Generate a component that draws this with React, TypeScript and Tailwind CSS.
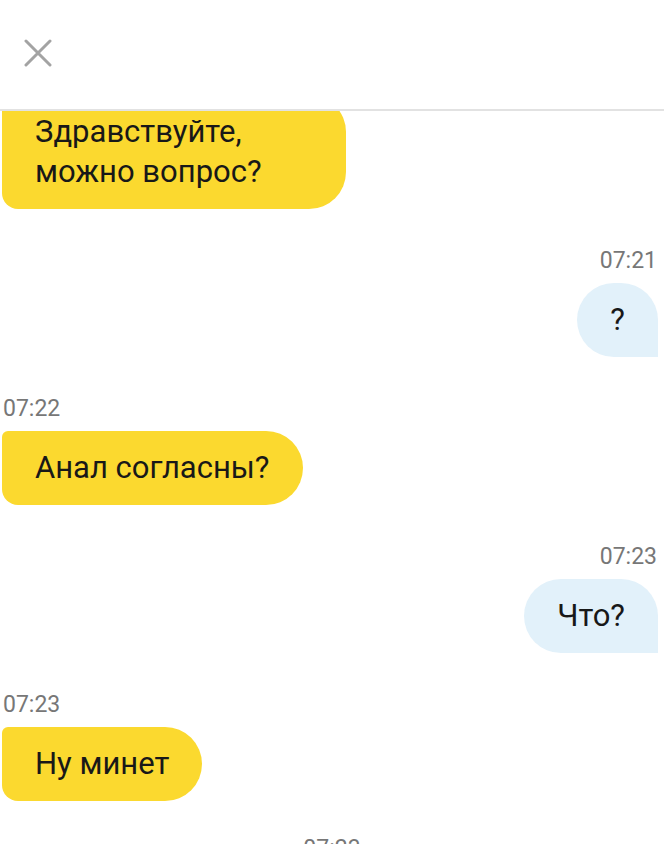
type Msg = {
  id: number;
  side: 'in' | 'out';
  time?: string;
  text: string;
};

const messages: Msg[] = [
  { id: 1, side: 'in', text: 'Здравствуйте, можно вопрос?' },
  { id: 2, side: 'out', time: '07:21', text: '?' },
  { id: 3, side: 'in', time: '07:22', text: 'Анал согласны?' },
  { id: 4, side: 'out', time: '07:23', text: 'Что?' },
  { id: 5, side: 'in', time: '07:23', text: 'Ну минет' },
];

function CloseIcon() {
  return (
    <svg width="28" height="28" viewBox="0 0 28 28" className="text-[#a3a3a3]">
      <path d="M2 2L26 26M26 2L2 26" stroke="currentColor" strokeWidth="3" strokeLinecap="round" fill="none" />
    </svg>
  );
}

function Bubble({ msg }: { msg: Msg }) {
  const isOut = msg.side === 'out';
  return (
    <div className={`flex flex-col ${isOut ? 'items-end pr-[6px]' : 'items-start pl-[2px]'}`}>
      {msg.time && (
        <div className={`h-[28px] mb-[8px] text-[23px] leading-[28px] text-[#777777] ${isOut ? 'pr-px' : 'pl-px'}`}>
          {msg.time}
        </div>
      )}
      <div
        className={
          isOut
            ? 'max-w-[344px] bg-[#e2f1fa] rounded-[37px] rounded-br-none px-[33px] py-[17px]'
            : 'max-w-[344px] bg-[#fbd92f] rounded-[37px] rounded-tl-[6px] rounded-bl-[16px] px-[33px] py-[17px]'
        }
      >
        <p className="text-[31px] leading-[40px] text-[#181818]">{msg.text}</p>
      </div>
    </div>
  );
}

export default function App() {
  return (
    <div className="w-[664px] h-[844px] bg-white flex flex-col overflow-hidden font-['Roboto',sans-serif]">
      <div className="h-[111px] shrink-0 flex items-center pl-[24px] pb-[4px] border-b-2 border-[#e2e2e2]">
        <CloseIcon />
      </div>
      <div className="flex-1 overflow-hidden">
        <div className="-mt-[16px] flex flex-col gap-[38px]">
          {messages.map((m) => (
            <Bubble key={m.id} msg={m} />
          ))}
          <div className="text-center text-[23px] leading-[20px] text-[#777777]">07:23</div>
        </div>
      </div>
    </div>
  );
}
